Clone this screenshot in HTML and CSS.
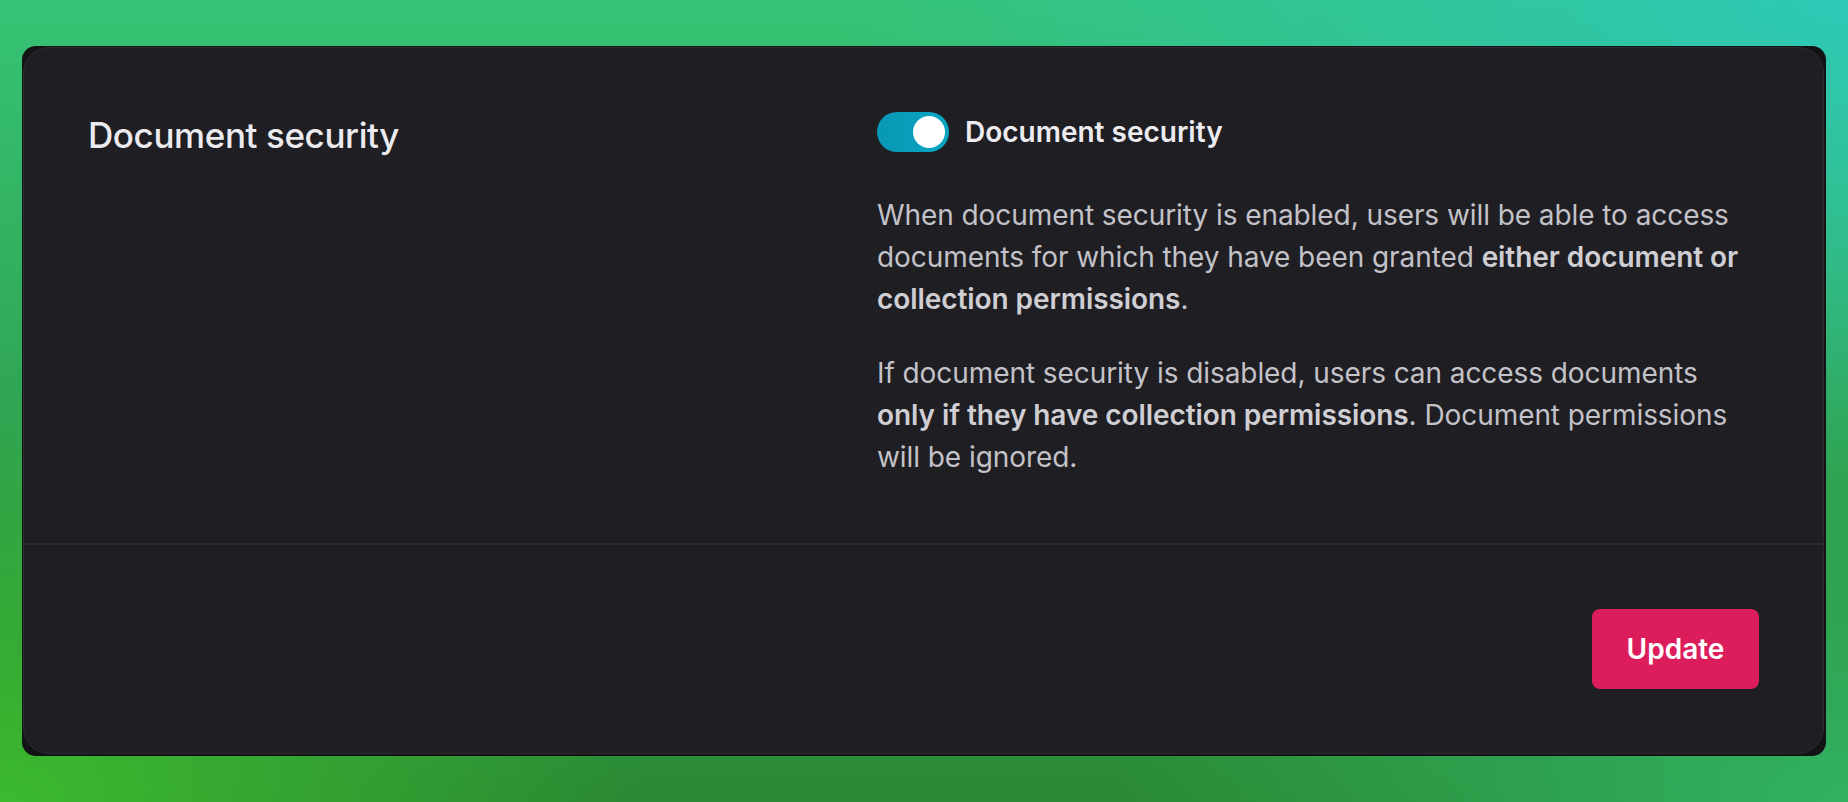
FILE: index.html
```html
<!DOCTYPE html>
<html lang="en">
<head>
<meta charset="utf-8">
<title>Document security</title>
<link rel="stylesheet" href="styles.css">
</head>
<body>
<div class="frame">
  <div class="card">
    <div class="card-body">
      <h2 class="title">Document security</h2>
      <div class="setting">
        <label class="toggle-row">
          <span class="toggle"><span class="knob"></span></span>
          <span class="toggle-label">Document security</span>
        </label>
        <p class="desc">When document security is enabled, users will be able to access documents for which they have been granted <strong>either document or collection permissions</strong>.</p>
        <p class="desc">If document security is disabled, users can access documents <strong>only if they have collection permissions</strong>. Document permissions will be ignored.</p>
      </div>
    </div>
    <div class="card-footer">
      <button class="btn">Update</button>
    </div>
  </div>
</div>
</body>
</html>
```
FILE: styles.css
```css
html, body {
  margin: 0;
  padding: 0;
  width: 100%;
  height: 100%;
}
body {
  font-family: Inter, "Noto Sans", sans-serif;
  background:
    radial-gradient(ellipse 55% 60% at 100% 0%, #2ec8b6 0%, rgba(46,200,182,0) 100%),
    radial-gradient(ellipse 35% 50% at 0% 100%, #3cba2e 0%, rgba(60,186,46,0) 100%),
    radial-gradient(ellipse 40% 50% at 100% 100%, #31b262 0%, rgba(49,178,98,0) 100%),
    linear-gradient(180deg, #36c375 0%, #2a8833 100%);
  padding: 46px 22px 0 22px;
  box-sizing: border-box;
}
.frame {
  background: #131215;
  border-radius: 14px;
  padding: 1px 2px 2px 1px;
  height: 710px;
  box-sizing: border-box;
}
.card {
  background: #1f1e23;
  border: 1px solid #2c2b31;
  border-radius: 26px;
  height: 100%;
  box-sizing: border-box;
  display: flex;
  flex-direction: column;
}
.card-body {
  display: grid;
  grid-template-columns: 789px 1fr;
  padding: 64px 64px 65px 64px;
  border-bottom: 2px solid #2b2a30;
}
.title {
  margin: 0;
  font-size: 35px;
  font-weight: 500;
  letter-spacing: -0.4px;
  line-height: 42px;
  color: #ebeaee;
  padding-top: 2px;
}
.setting {
  display: flex;
  flex-direction: column;
}
.toggle-row {
  display: flex;
  align-items: center;
  gap: 16px;
  height: 40px;
  margin-bottom: 42px;
}
.toggle {
  width: 72px;
  height: 40px;
  border-radius: 20px;
  background: linear-gradient(90deg, #0898b5 0%, #0aa6c3 100%);
  display: flex;
  align-items: center;
  justify-content: flex-end;
  padding: 0 4px;
  box-sizing: border-box;
}
.knob {
  width: 32px;
  height: 32px;
  border-radius: 50%;
  background: #ffffff;
}
.toggle-label {
  font-size: 28px;
  font-weight: 600;
  color: #ecebef;
}
.desc {
  margin: 0;
  font-size: 28px;
  line-height: 42px;
  letter-spacing: -0.07px;
  color: #c3c2c8;
}
.desc + .desc {
  margin-top: 32px;
}
.desc strong {
  font-weight: 600;
  color: #cfced3;
}
.card-footer {
  display: flex;
  justify-content: flex-end;
  padding: 64px 64px 0 64px;
}
.btn {
  width: 167px;
  height: 80px;
  border: none;
  border-radius: 8px;
  background: #dc1d5b;
  color: #ffffff;
  font-family: Inter, "Noto Sans", sans-serif;
  font-size: 28px;
  font-weight: 600;
  cursor: pointer;
}
```
